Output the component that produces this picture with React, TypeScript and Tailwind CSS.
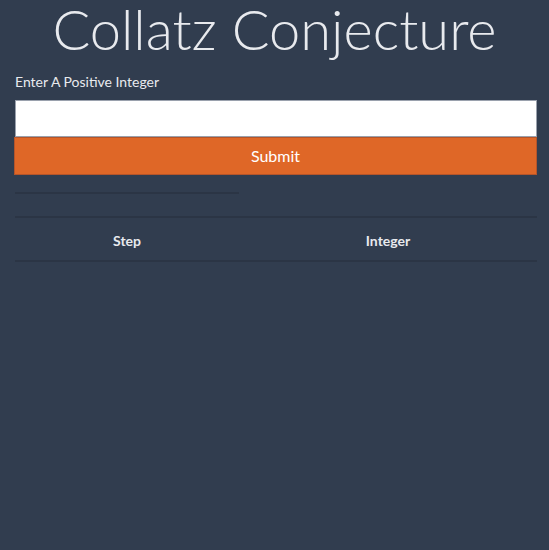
import React from 'react';

const App: React.FC = () => {
  return (
    <div className="min-h-[550px] bg-[#313d4f] font-['Lato',sans-serif] text-[#e8eaee]">
      {/* Title */}
      <h1 className="text-center text-[56px] font-light leading-[58px] h-[66px]">Collatz Conjecture</h1>

      <div className="ml-[15px] w-[522px]">
        <label className="block text-[14px] mt-[8px] leading-[16px]">Enter A Positive Integer</label>
        <input
          type="text"
          className="block w-full h-[37px] mt-[10px] bg-white border border-[#9aa1ad] outline-none"
        />
        <button className="block w-[523px] -ml-px h-[38px] bg-[#df6727] border border-[#b5552a] text-white text-[16px]">
          Submit
        </button>

        {/* Results table */}
        <div className="mt-[17px]">
          <div className="w-[224px] border-b-2 border-[#2b3545]"></div>
          <div className="h-[24px] border-b-2 border-[#2b3545]"></div>
          <div className="flex h-[44px] items-center border-b-2 border-[#2b3545] text-[14px] font-bold pt-[2px]">
            <div className="w-[224px] text-center">Step</div>
            <div className="flex-1 text-center">Integer</div>
          </div>
        </div>
      </div>
    </div>
  );
};

export default App;
